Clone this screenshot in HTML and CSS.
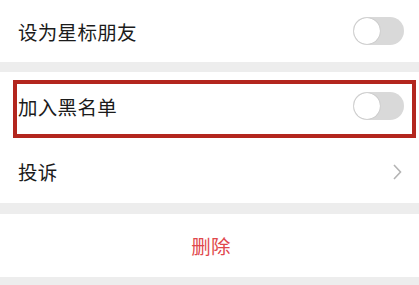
FILE: index.html
```html
<!DOCTYPE html>
<html lang="zh-CN">
<head>
  <meta charset="UTF-8" />
  <meta name="viewport" content="width=device-width, initial-scale=1.0"/>
  <title>资料设置</title>
  <link rel="stylesheet" href="styles.css">
</head>
<body>

<!-- Star friend -->
<div class="group">
  <div class="cell cell-first">
    <span class="label">设为星标朋友</span>
    <span class="switch"><span class="knob"></span></span>
  </div>
</div>

<!-- Blacklist + complain -->
<div class="group gap">
  <div class="cell cell-black">
    <span class="label">加入黑名单</span>
    <span class="switch"><span class="knob"></span></span>
    <div class="highlight"></div>
  </div>
  <div class="cell cell-complain">
    <span class="label">投诉</span>
    <svg class="arrow" width="9" height="16" viewBox="0 0 9 16">
      <path d="M1 1 L7.5 8 L1 15" fill="none" stroke="#b4b4b4" stroke-width="1.6"/>
    </svg>
  </div>
</div>

<!-- Delete -->
<div class="group gap-lg">
  <div class="cell cell-delete">
    <span class="danger">删除</span>
  </div>
</div>

</body>
</html>
```

FILE: styles.css
```css
body {
  margin: 0;
  background: #ededed;
  font-family: "Noto Sans CJK SC", "Noto Sans", sans-serif;
  color: #1b1b1b;
}

.group {
  background: #fff;
}

.gap {
  margin-top: 10px;
}

.gap-lg {
  margin-top: 11px;
}

.cell {
  display: flex;
  align-items: center;
  justify-content: space-between;
  padding: 0 15px 0 18px;
  position: relative;
}

.cell-first {
  height: 62px;
}

.cell-black {
  height: 68px;
}

.cell-complain {
  height: 63px;
}

.cell-delete {
  height: 63px;
  justify-content: center;
}

.label {
  font-size: 19.5px;
  letter-spacing: 0.3px;
}

.danger {
  font-size: 19.5px;
  color: #e0484b;
  letter-spacing: 0.3px;
}

.switch {
  width: 51px;
  height: 28px;
  border-radius: 14px;
  background: #d9d9d9;
  position: relative;
}

.knob {
  position: absolute;
  left: 1px;
  top: 1px;
  width: 26px;
  height: 26px;
  border-radius: 50%;
  background: #fff;
  box-shadow: 0 0 1px rgba(0, 0, 0, 0.35);
}

.arrow {
  margin-right: 2px;
}

.highlight {
  position: absolute;
  left: 13px;
  right: 3px;
  top: 8px;
  height: 58px;
  border: 4px solid #b3261e;
  box-sizing: border-box;
  pointer-events: none;
}
```
